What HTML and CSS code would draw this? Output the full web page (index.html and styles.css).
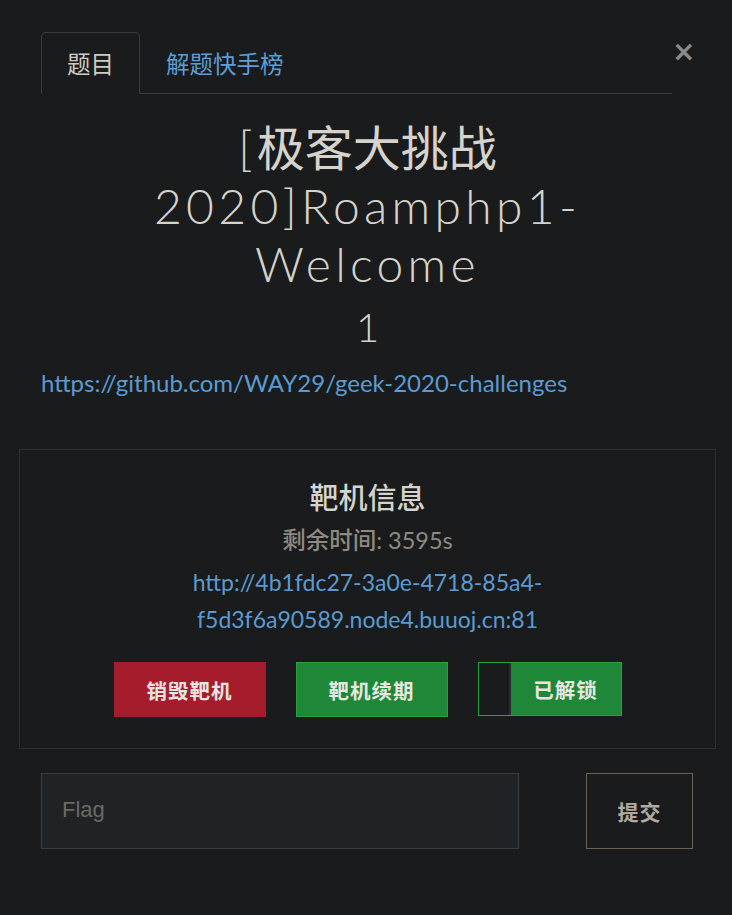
FILE: index.html
```html
<!DOCTYPE html>
<html lang="zh">
<head>
<meta charset="utf-8">
<link rel="stylesheet" href="styles.css">
</head>
<body>
<div class="modal">
  <div class="tabs-row">
    <ul class="tabs">
      <li class="tab active">题目</li>
      <li class="tab link">解题快手榜</li>
    </ul>
    <span class="close">×</span>
  </div>
  <h2 class="name">[<span class="cjk">极客大挑战</span> 2020]Roamphp1-Welcome</h2>
  <h3 class="value">1</h3>
  <p class="desc"><a href="#">https://github.com/WAY29/geek-2020-challenges</a></p>
  <div class="panel">
    <h4 class="panel-title">靶机信息</h4>
    <div class="remain"><span class="cjk-m">剩余时间</span>: 3595s</div>
    <a class="host" href="#">http://4b1fdc27-3a0e-4718-85a4-f5d3f6a90589.node4.buuoj.cn:81</a>
    <div class="actions">
      <button class="btn red">销毁靶机</button>
      <button class="btn green">靶机续期</button>
      <div class="unlock"><span class="box"></span><span class="lbl">已解锁</span></div>
    </div>
  </div>
  <div class="submit-row">
    <div class="flag">Flag</div>
    <button class="submit">提交</button>
  </div>
</div>
</body>
</html>
```
FILE: styles.css
```css
html, body {
  margin: 0;
  padding: 0;
  background: #1a1b1d;
  color: #d6d3cc;
  font-family: Lato, "Noto Sans CJK SC", sans-serif;
}
.modal {
  width: 697px;
  margin-left: 19px;
  padding-top: 32px;
}
.tabs-row {
  display: flex;
  align-items: flex-start;
  margin: 0 22px;
}
.tabs {
  list-style: none;
  margin: 0;
  padding: 0;
  display: flex;
  flex: 0 0 631px;
  border-bottom: 1px solid #3a3b3d;
}
.tab {
  font-family: "Noto Sans CJK SC", sans-serif;
  font-size: 23.5px;
  height: 60px;
  line-height: 60px;
  padding: 0 25px 0 25px;
  margin-bottom: -1px;
  border: 1px solid transparent;
  border-radius: 5px 5px 0 0;
}
.tab.active {
  border-color: #3a3b3d;
  border-bottom-color: #1a1b1d;
  color: #d0ccc4;
}
.tab.link {
  color: #5b9fd6;
}
.close {
  margin-left: auto;
  margin-top: 2px;
  font-family: "DejaVu Sans", sans-serif;
  font-size: 28px;
  font-weight: bold;
  color: #8a8a8a;
  line-height: 36px;
  margin-right: -1px;
}
.name {
  margin: 22px auto 0;
  width: 600px;
  text-align: center;
  font-family: Lato, "Noto Sans CJK SC", sans-serif;
  font-weight: 300;
  font-size: 48px;
  letter-spacing: 4.3px;
  line-height: 58px;
}
.name .cjk {
  font-family: "Noto Sans CJK SC", sans-serif;
  font-weight: 400;
  letter-spacing: 0;
}
.value {
  margin: 10px 0 0;
  text-align: center;
  font-weight: 300;
  font-size: 40px;
  line-height: 48px;
}
.desc {
  margin: 15px 22px 0;
  font-size: 24px;
  line-height: 34px;
}
a {
  color: #5b9bd1;
  text-decoration: none;
}
.panel {
  margin-top: 49px;
  border: 1px solid #2c2e31;
  padding: 26px 0 31px;
  text-align: center;
}
.panel-title {
  margin: 0;
  font-family: "Noto Sans CJK SC", sans-serif;
  font-weight: 500;
  font-size: 29px;
  line-height: 40px;
}
.remain {
  margin-top: 8px;
  color: #8f8a81;
  font-size: 23.5px;
  line-height: 30px;
}
.cjk-m {
  font-family: "Noto Sans CJK SC", sans-serif;
  font-weight: 500;
}
.host {
  display: block;
  width: 420px;
  margin: 9px auto 0;
  font-size: 23px;
  line-height: 37px;
}
.actions {
  display: flex;
  justify-content: center;
  gap: 30px;
  margin-top: 24px;
}
.btn {
  width: 152px;
  height: 55px;
  border: 1px solid transparent;
  font-family: "Noto Sans CJK SC", sans-serif;
  font-weight: 700;
  font-size: 20.5px;
  color: #e8e6e1;
  padding: 0;
  letter-spacing: 1px;
}
.btn.red {
  background: #a51d2d;
  border-color: #a51d2d;
}
.btn.green {
  background: #1f8838;
  border-color: #2aa03f;
}
.unlock {
  display: flex;
  width: 144px;
  height: 54px;
  box-sizing: border-box;
  border: 1px solid #2aa03f;
  background: #1f8838;
}
.unlock .box {
  width: 30px;
  background: #1a1b1d;
  border-right: 2px solid #2b2d2f;
}
.unlock .lbl {
  flex: 1;
  line-height: 52px;
  font-family: "Noto Sans CJK SC", sans-serif;
  font-weight: 700;
  font-size: 20.5px;
  color: #e8e6e1;
  letter-spacing: 1px;
}
.submit-row {
  display: flex;
  justify-content: space-between;
  margin: 24px 23px 0 22px;
}
.flag {
  width: 478px;
  height: 76px;
  box-sizing: border-box;
  background: #202326;
  border: 1px solid #3b3e41;
  padding-left: 20px;
  line-height: 72px;
  font-family: "Liberation Sans", sans-serif;
  font-size: 22px;
  color: #6c6a64;
}
.submit {
  width: 107px;
  height: 76px;
  background: #1a1b1d;
  border: 1px solid #6b6259;
  color: #b0aaa0;
  font-family: "Noto Sans CJK SC", sans-serif;
  font-weight: 700;
  font-size: 21px;
  letter-spacing: 1px;
}
```
